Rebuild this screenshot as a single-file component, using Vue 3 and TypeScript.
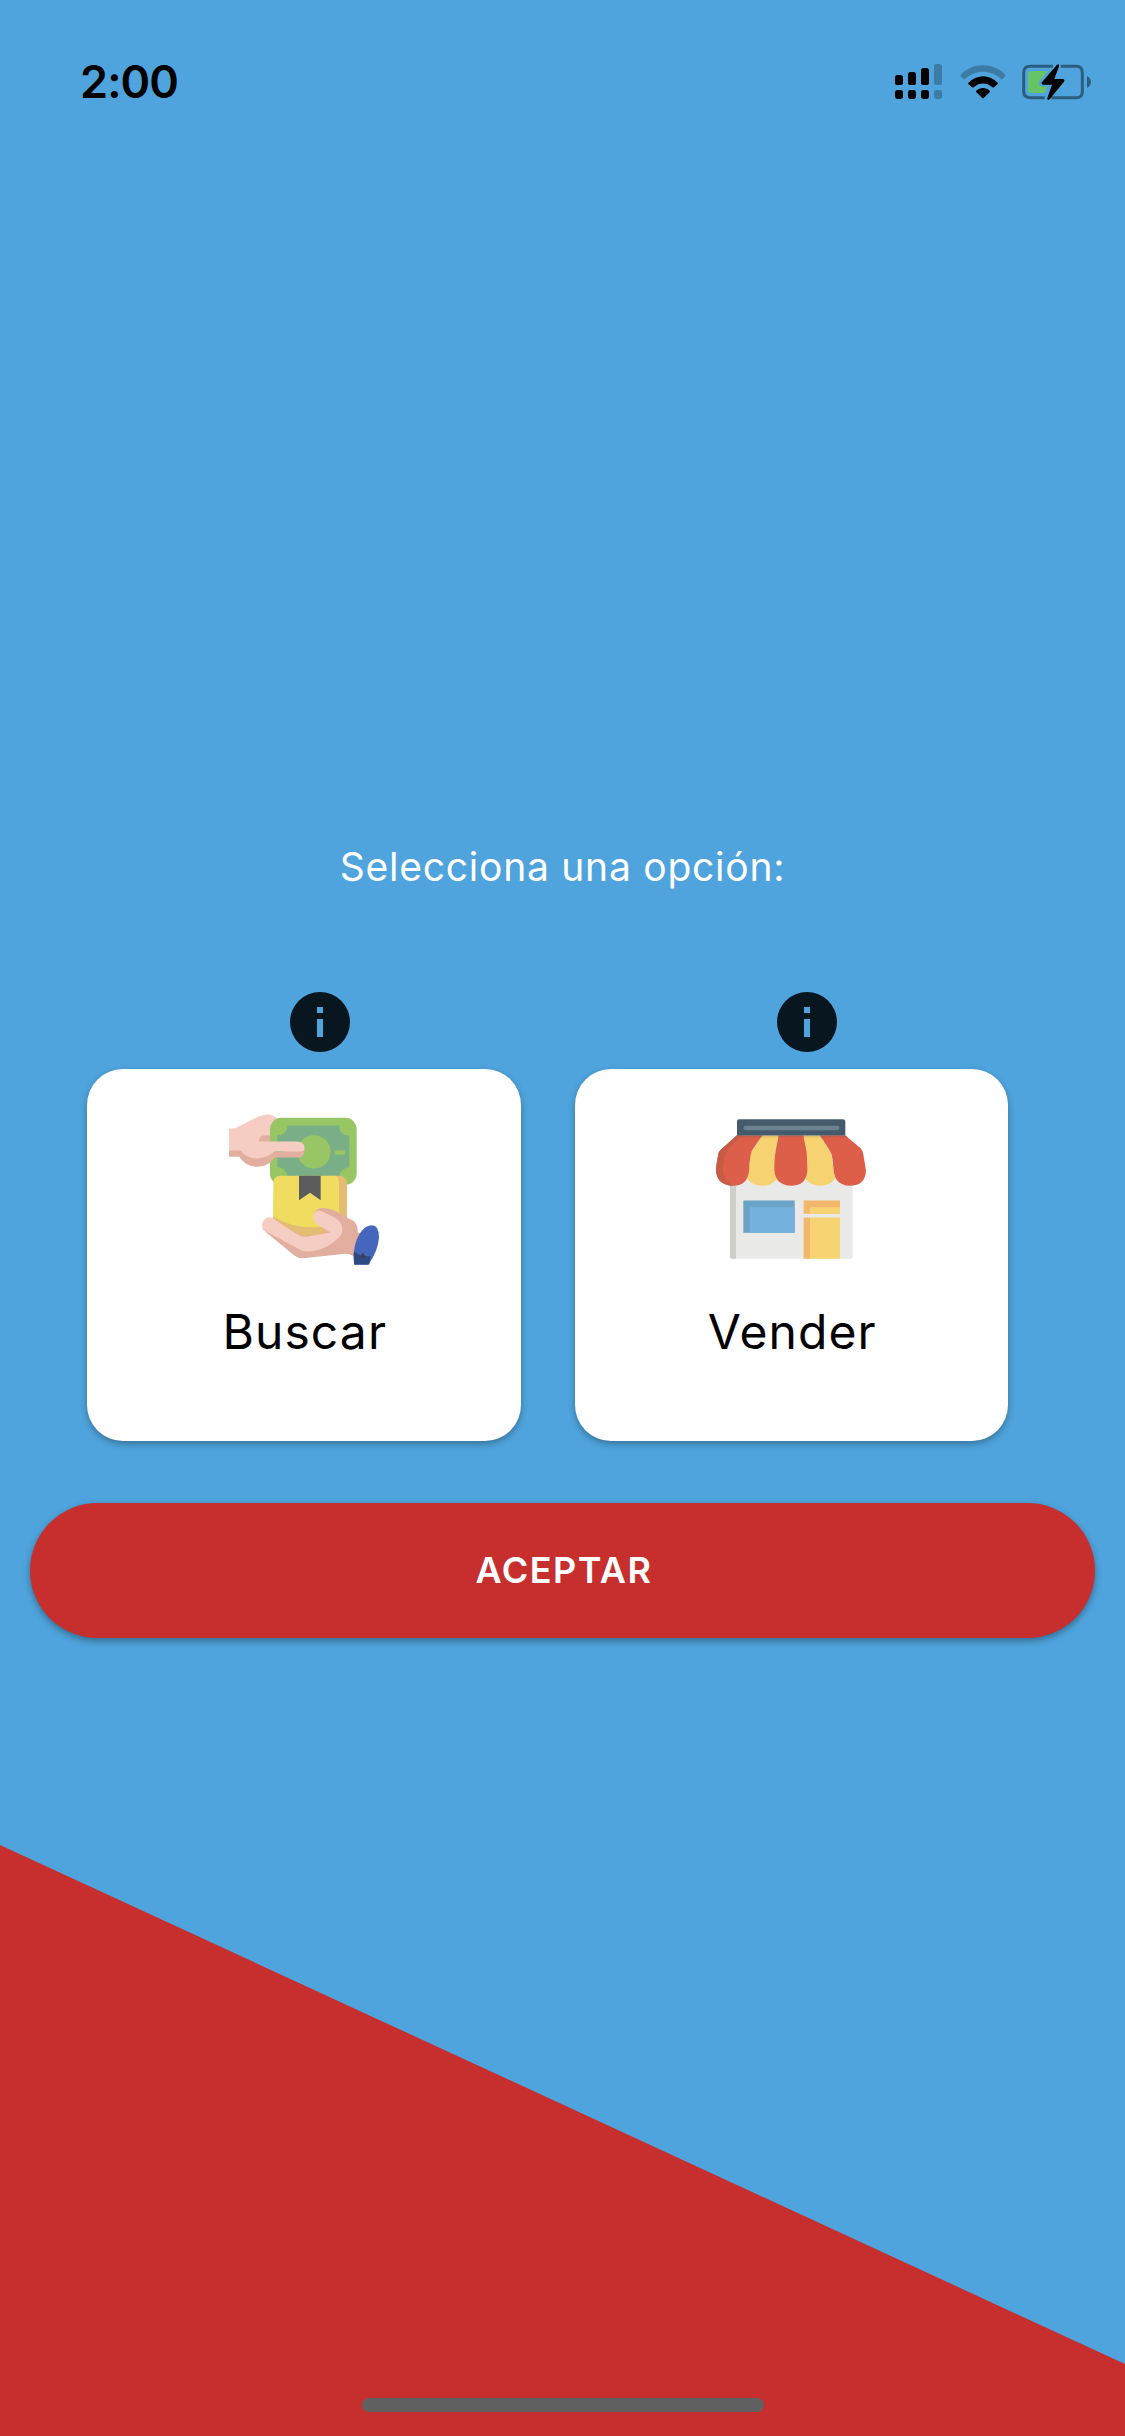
<script setup lang="ts">
import { ref } from 'vue'

type OptionId = 'buscar' | 'vender'

interface Option {
  id: OptionId
  label: string
}

const options: Option[] = [
  { id: 'buscar', label: 'Buscar' },
  { id: 'vender', label: 'Vender' },
]

const selected = ref<OptionId | null>(null)
</script>

<template>
  <main class="screen">
    <div class="wedge"></div>

    <header class="status">
      <span class="time">2:00</span>
      <div class="indicators">
        <svg class="signal" viewBox="895 64 47 36" width="47" height="36">
          <rect x="895" y="75" width="8" height="10" rx="2.6" />
          <rect x="908" y="72" width="8" height="13" rx="2.6" />
          <rect x="921" y="68" width="8" height="17" rx="2.6" />
          <rect x="934" y="64" width="8" height="21" rx="2.6" opacity=".25" />
          <rect x="895" y="90" width="8" height="9" rx="2.4" />
          <rect x="908" y="90" width="8" height="9" rx="2.4" />
          <rect x="921" y="90" width="8" height="9" rx="2.4" />
          <rect x="934" y="90" width="8" height="9" rx="2.4" opacity=".25" />
        </svg>
        <svg class="wifi" viewBox="240 42 138 105" width="46" height="35">
          <path d="M242 74C278 36 341 36 376 74Q378 77 376 79L367 87Q365 89 362 86C332 58 286 58 256 86Q253 89 251 87L242 79Q240 77 242 74Z" opacity=".25" />
          <path d="M265 98C290 72 329 72 353 98Q355 101 352 103L342 112Q339 114 336 111C320 97 298 97 282 111Q279 114 276 112L266 103Q263 101 265 98Z" />
          <path d="M289 122C300 111 318 111 329 122Q331 125 329 127L312 143Q309 146 306 143L289 127Q287 125 289 122Z" />
        </svg>
        <svg class="battery" viewBox="426 39 210 114" width="70" height="38">
          <path d="M519 49H450Q431 49 431 69V124Q431 143 450 143H494M542 49H589Q607 49 607 68V125Q607 143 589 143H514" fill="none" stroke="#000" stroke-width="9" opacity=".43" />
          <path d="M621 78Q633 85 633 96Q633 107 621 114Z" opacity=".43" />
          <path d="M455 63H504L478 94Q472 108 484 109H502L494 129H455Q444 129 444 118V74Q444 63 455 63Z" fill="#66c466" />
          <path d="M531 44Q539 40 537 49L523 87H549Q556 89 552 95L509 148Q501 153 502 144L516 104H489Q481 102 487 95Z" />
        </svg>
      </div>
    </header>

    <section class="content">
      <h1 class="title">Selecciona una opción:</h1>

      <div class="options">
        <div v-for="option in options" :key="option.id" class="option">
          <button class="info" type="button" :aria-label="'Información: ' + option.label">
            <svg viewBox="0 0 60 60" width="60" height="60">
              <path fill-rule="evenodd" fill="#08171f" d="M30 0a30 30 0 1 0 0 60a30 30 0 1 0 0-60ZM27 15h6v6h-6ZM27 27h6v18h-6Z" />
            </svg>
          </button>

          <button
            class="card"
            type="button"
            :aria-pressed="selected === option.id"
            @click="selected = option.id"
          >
            <svg v-if="option.id === 'buscar'" class="art" viewBox="57 42 450 452">
              <path fill="#f6cdc2" d="M57 85L76 84L135 54Q180 31 202 56V130L110 172L57 152Z" />
              <path fill="#e1ae9f" d="M147 124Q148 105 163 105H190V130H147Z" />
              <rect x="180" y="53" width="260" height="201" rx="34" fill="#98c665" />
              <path fill="#7aae87" d="M233 76H388Q387 103 418 106V201Q389 204 387 232H233Q232 204 202 201V106Q232 104 233 76Z" />
              <circle cx="312" cy="155" r="50" fill="#98c665" />
              <rect x="374" y="150" width="31" height="14" rx="4" fill="#98c665" />
              <path fill="#e1ae9f" d="M57 150H95L180 158L284 147Q284 171 266 172H194Q178 198 143 200Q108 202 88 170H57Z" />
              <path fill="#f6cdc2" d="M57 124H263Q283 126 284 144Q284 153 270 154H193Q174 173 142 175Q110 176 91 150H57Z" />
              <path fill="#e3bd74" d="M365 227H389Q411 229 411 252V370L355 407L275 414L189 372V345Z" />
              <path fill="#f0dd60" d="M209 227H376Q387 230 387 246V360L355 378Q255 391 189 349L190 250Q190 229 209 227Z" />
              <path fill="#5c5c5c" d="M267 227H332V300L300 278L267 300Z" />
              <path fill="#e1ae9f" d="M158 387Q160 350 185 359L280 410L350 398L312 340Q322 319 350 325Q374 329 389 341L430 362Q444 373 443 397L456 399L431 468Q418 461 407 461L278 474Q264 474 252 465L169 397Z" />
              <path fill="#f6cdc2" d="M156 377Q157 358 173 352Q184 350 194 358Q235 387 269 406Q282 411 294 409L361 397L326 375Q309 366 310 346Q315 327 336 333L373 352Q405 370 396 398Q388 418 352 438Q317 455 287 454Q276 453 258 442L174 397Q157 391 156 377Z" />
              <path fill="#4665bc" d="M487 375Q507 376 507 411Q505 452 474 494H433Q427 454 440 419Q458 375 487 375Z" />
              <path fill="#30497f" d="M432 454Q450 469 482 468L478 493H433Q430 480 432 454Z" />
              <path fill="#3b414b" d="M458 457L467 470L451 472Z" />
            </svg>

            <svg v-else class="art" viewBox="48 42 450 452">
              <path fill="#e9e9e8" d="M90 225H458V469Q458 476 451 476H98Q90 476 90 468Z" />
              <path fill="#cecfcb" d="M90 245H108V476H98Q90 476 90 468Z" />
              <rect x="130" y="301" width="154" height="97" fill="#6ba3c7" />
              <rect x="149" y="321" width="135" height="77" fill="#74b2dd" />
              <path fill="#f1b86c" d="M311 301H420V341H311ZM311 352H330V476H311Z" />
              <path fill="#f7d270" d="M330 321H420V341H330ZM330 352H420V476H330Z" />
              <path fill="#f7d270" d="M187 106H237L226 154L230 237Q212 258 185 257Q157 256 141 236L153 157ZM310 106H360L393 157L405 236Q389 257 362 257Q334 257 318 238Z" />
              <path fill="#000" opacity=".08" d="M183 106H240V113H180ZM308 106H360L365 113H309Z" />
              <path fill="#dd5e49" d="M110 106H187L158 148Q150 158 147 211Q143 257 99 257Q51 255 48 211Q48 196 56 157Q58 151 69 143ZM236 106H310L319 151Q321 159 322 211Q319 257 273 257Q227 255 223 211Q223 174 227 151ZM360 106H436L482 144Q489 151 490 163L498 211Q496 257 449 257Q405 255 401 211Q397 162 391 154Z" />
              <path fill="#c65b46" d="M110 106H126L89 143Q74 155 68 205Q67 241 99 257Q51 255 48 211Q48 196 56 157Q58 151 69 143Z" />
              <path fill="#c65b46" d="M110 106H187L182 112H105ZM236 106H310L312 112H235ZM360 106H436L443 112H364Z" />
              <path fill="#455b6c" d="M118 57H429Q436 57 436 65V106H111V65Q111 57 118 57Z" />
              <rect x="130" y="77" width="288" height="13" rx="6.5" fill="#6d828f" />
            </svg>
            <span class="label">{{ option.label }}</span>
          </button>
        </div>
      </div>

      <button class="accept" type="button">ACEPTAR</button>
    </section>

    <div class="home"></div>
  </main>
</template>

<style>
body {
  margin: 0;
  background: #4fa4dd;
}
</style>

<style scoped>
.screen {
  position: relative;
  display: flex;
  flex-direction: column;
  box-sizing: border-box;
  width: 1125px;
  height: 2436px;
  overflow: hidden;
  background: #4fa4dd;
  font-family: Inter, 'Liberation Sans', sans-serif;
}

.wedge {
  position: absolute;
  inset: 1845px 0 0;
  background: #c62f2d;
  clip-path: polygon(0 0, 100% 519px, 100% 100%, 0 100%);
}

.status {
  position: relative;
  display: flex;
  justify-content: space-between;
  box-sizing: border-box;
  height: 132px;
  padding: 55px 33px 0 80px;
}

.time {
  font-size: 45px;
  line-height: 54px;
  font-weight: 600;
  letter-spacing: -0.9px;
}

.indicators {
  display: flex;
  align-items: flex-start;
  padding-top: 8px;
}

.signal {
  margin-top: 1px;
}

.wifi {
  margin: 1px 16px 0 18px;
}

.content {
  position: relative;
  display: flex;
  flex: 1;
  flex-direction: column;
  padding: 711px 30px 0;
}

.title {
  margin: 0;
  color: #fff;
  font-size: 39px;
  line-height: 48px;
  font-weight: 400;
  letter-spacing: 0.75px;
  text-align: center;
}

.options {
  display: flex;
  gap: 54px;
  margin-top: 101px;
  padding-left: 57px;
}

.option {
  display: flex;
  flex-direction: column;
  width: 433.5px;
}

button {
  padding: 0;
  border: 0;
  font: inherit;
}

.info {
  display: flex;
  align-self: center;
  margin-left: 32px;
  background: none;
}

.card {
  display: flex;
  flex-direction: column;
  align-items: center;
  box-sizing: border-box;
  height: 372px;
  margin-top: 17.4px;
  padding-top: 45px;
  border-radius: 36px;
  background: #fff;
  box-shadow: 0 3px 7px rgba(0, 0, 0, 0.3);
}

.art {
  width: 150px;
  height: 151px;
}

.label {
  margin-top: 37px;
  padding-left: 2px;
  color: #000;
  font-size: 48px;
  line-height: 60px;
  font-weight: 400;
  letter-spacing: 1.1px;
}

.accept {
  height: 135px;
  margin-top: 61.6px;
  padding-left: 3px;
  border-radius: 68px;
  background: #c62f2d;
  box-shadow: 0 3px 7px rgba(0, 0, 0, 0.35);
  color: #fff;
  font-size: 36px;
  font-weight: 600;
  letter-spacing: 1.5px;
}

.home {
  position: relative;
  align-self: center;
  width: 402px;
  height: 14px;
  margin-bottom: 24px;
  border-radius: 7px;
  background: #616161;
}
</style>
